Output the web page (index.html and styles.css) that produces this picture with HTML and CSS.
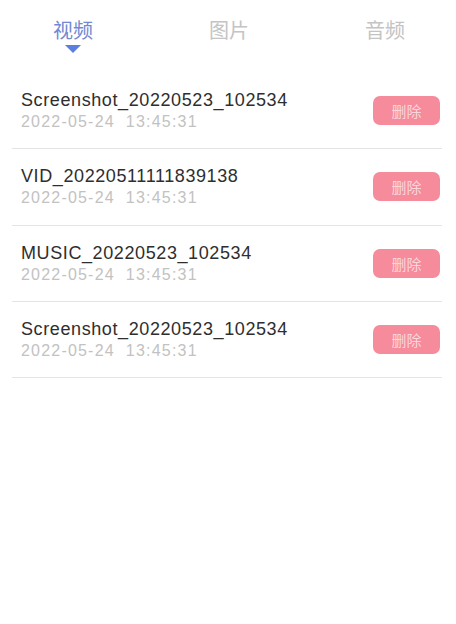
FILE: index.html
```html
<!DOCTYPE html>
<html lang="zh">

<head>
  <meta charset="UTF-8">
  <title>文件列表</title>
  <link rel="stylesheet" href="styles.css">
</head>

<body>
  <div class="tabs">
    <div class="tab active">视频<span class="arrow"></span></div>
    <div class="tab">图片</div>
    <div class="tab">音频</div>
  </div>

  <ul class="files">
    <li class="file">
      <div class="info">
        <div class="name">Screenshot_20220523_102534</div>
        <div class="time">2022-05-24<span class="gap"></span>13:45:31</div>
      </div>
      <span class="del">删除</span>
    </li>
    <li class="file">
      <div class="info">
        <div class="name">VID_20220511111839138</div>
        <div class="time">2022-05-24<span class="gap"></span>13:45:31</div>
      </div>
      <span class="del">删除</span>
    </li>
    <li class="file">
      <div class="info">
        <div class="name">MUSIC_20220523_102534</div>
        <div class="time">2022-05-24<span class="gap"></span>13:45:31</div>
      </div>
      <span class="del">删除</span>
    </li>
    <li class="file">
      <div class="info">
        <div class="name">Screenshot_20220523_102534</div>
        <div class="time">2022-05-24<span class="gap"></span>13:45:31</div>
      </div>
      <span class="del">删除</span>
    </li>
  </ul>
</body>

</html>
```

FILE: styles.css
```css
body {
  margin: 0;
  background: #fff;
  font-family: "Liberation Sans", "Noto Sans CJK SC", sans-serif;
}

.tabs {
  height: 73px;
  box-sizing: border-box;
  padding: 18px 51px 0 53px;
  display: flex;
  justify-content: space-between;
}

.tab {
  font-family: "Noto Sans CJK SC", sans-serif;
  font-size: 20px;
  line-height: 24px;
  color: #c4c4c4;
  display: flex;
  flex-direction: column;
  align-items: center;
}

.tab.active {
  color: #7189d4;
}

.arrow {
  margin-top: 3px;
  width: 0;
  height: 0;
  border-left: 8px solid transparent;
  border-right: 8px solid transparent;
  border-top: 8px solid #5b7fe0;
}

.files {
  list-style: none;
  margin: 0 14px 0 12px;
  padding: 0;
}

.file {
  height: 75.3px;
  padding: 0 2px 0 9px;
  border-bottom: 1px solid #e4e4e4;
  display: flex;
  align-items: center;
  justify-content: space-between;
}

.name {
  font-size: 18px;
  line-height: 22px;
  letter-spacing: 0.6px;
  color: #2e2e2e;
}

.time {
  font-size: 16px;
  line-height: 21px;
  letter-spacing: 1.2px;
  color: #c2c2c2;
}

.gap {
  display: inline-block;
  width: 11px;
}

.del {
  width: 67px;
  height: 29px;
  border-radius: 7px;
  background: #f58b9b;
  color: #fcd6dc;
  font-family: "Noto Sans CJK SC", sans-serif;
  font-size: 15px;
  display: flex;
  align-items: center;
  justify-content: center;
}
```
